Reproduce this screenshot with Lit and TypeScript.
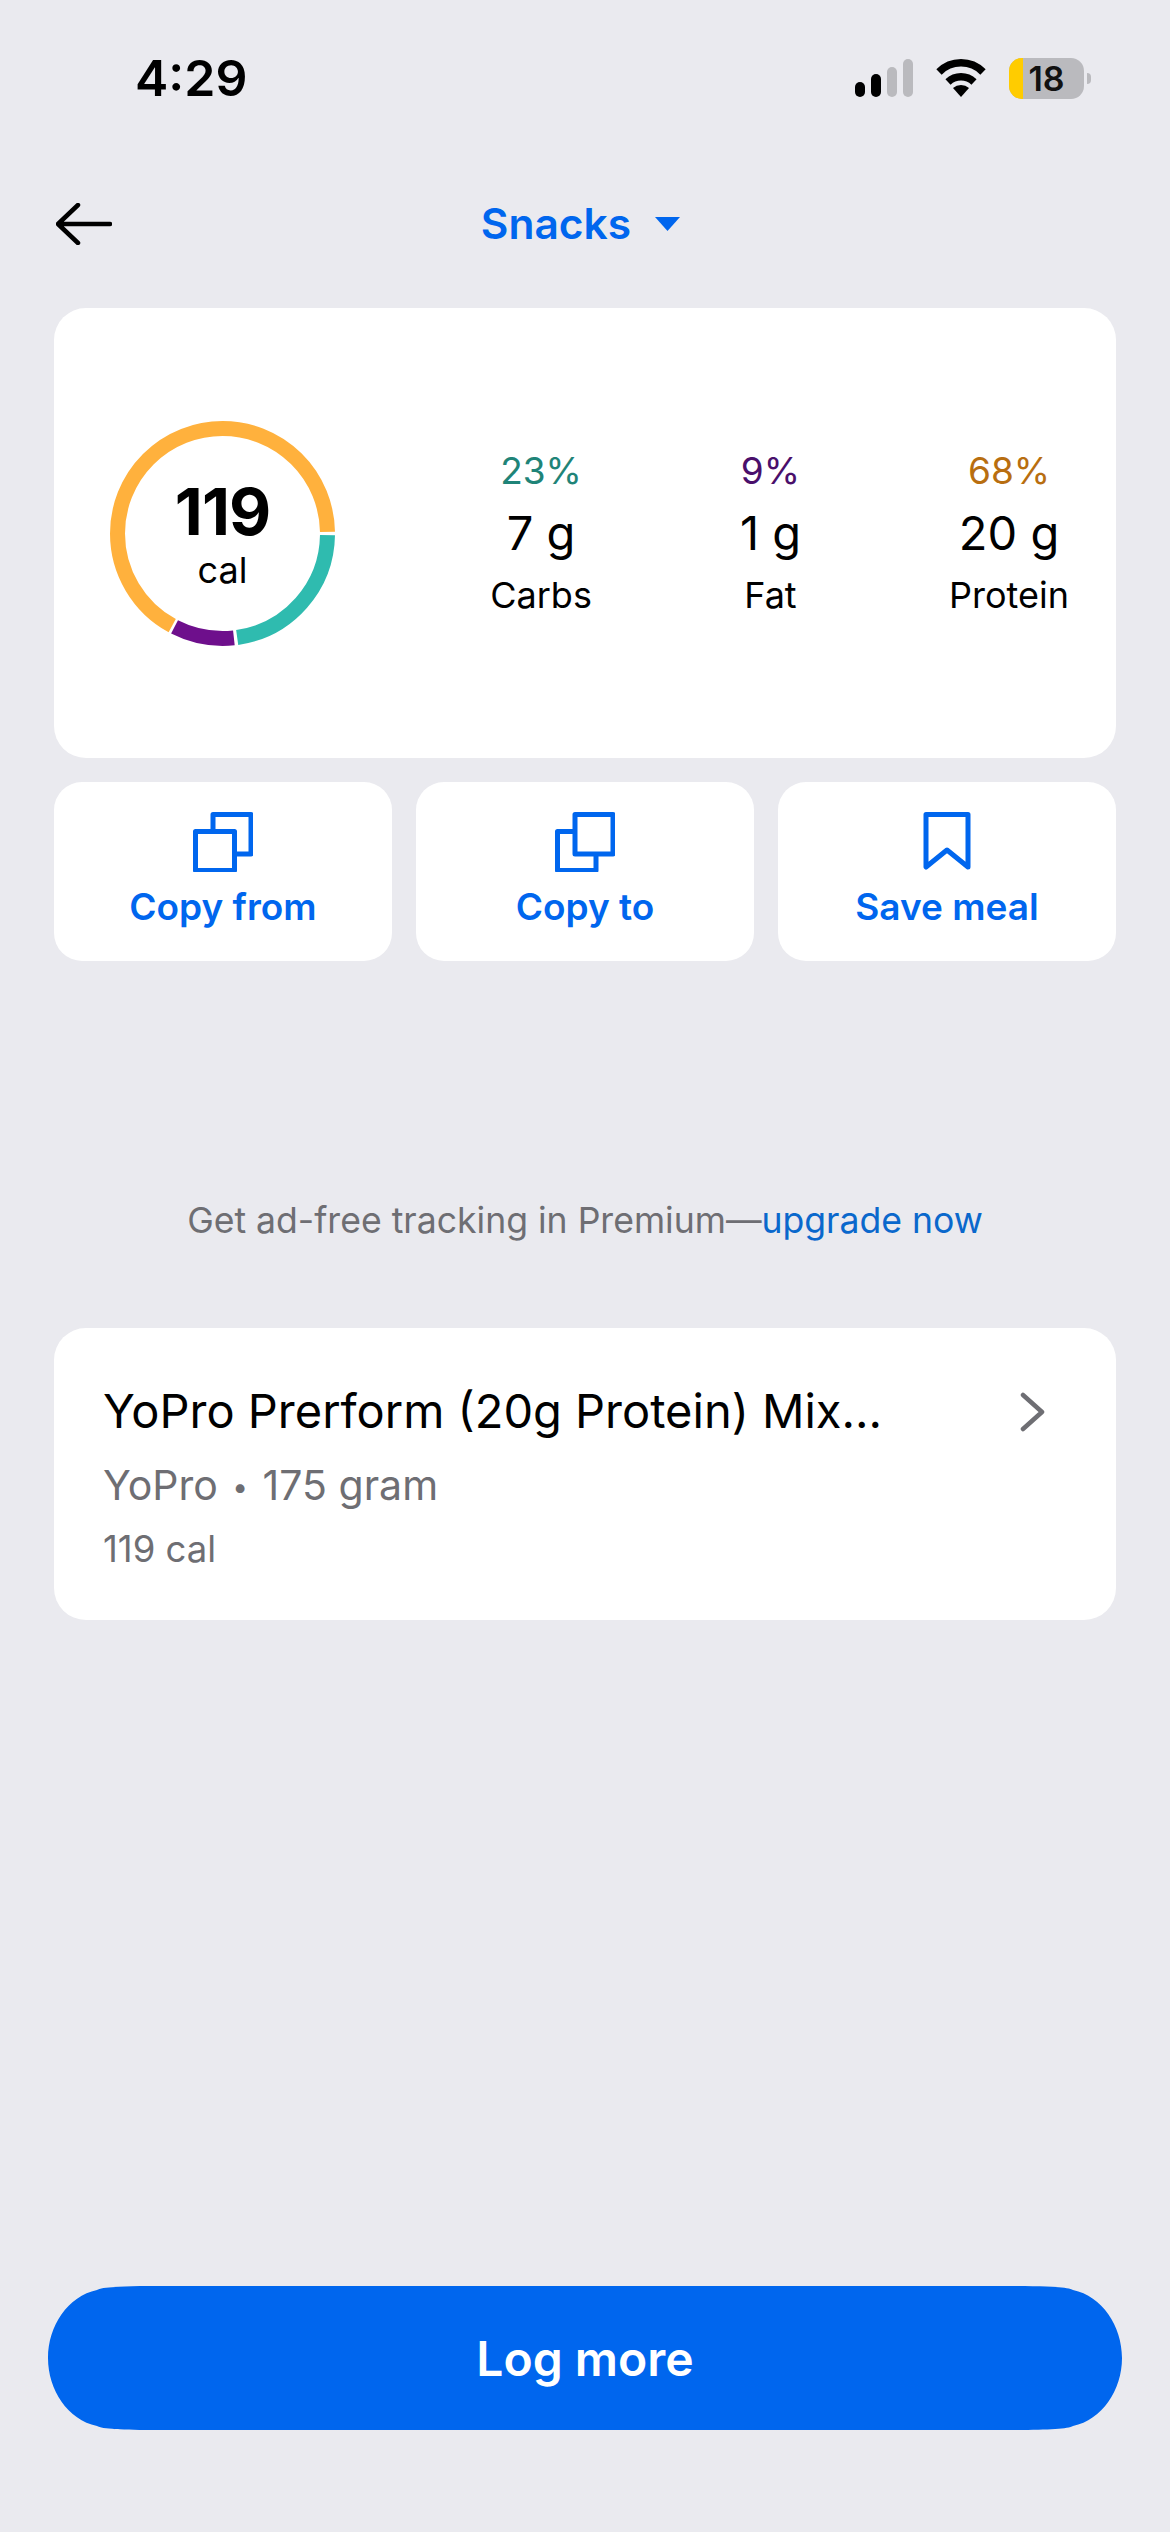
import { LitElement, html, css, svg } from "lit";
import { customElement } from "lit/decorators.js";

const RING = [
  { color: "#2FBBAF", start: 0, pct: 23 },
  { color: "#6E0F8C", start: 23, pct: 9.8 },
  { color: "#FFB13D", start: 32.7, pct: 67.3 },
];
const MACROS = [
  { pct: "23%", val: "7 g", name: "Carbs", cls: "teal" },
  { pct: "9%", val: "1 g", name: "Fat", cls: "purple" },
  { pct: "68%", val: "20 g", name: "Protein", cls: "orange" },
];

const copyFrom = html`<svg class="ico" viewBox="0 0 60 60" fill="none" stroke="#0066EE" stroke-width="5" stroke-linejoin="round">
  <path d="M20 19.5V2.5H58V42H44"/><rect x="2.5" y="19.5" width="39" height="39"/></svg>`;
const copyTo = html`<svg class="ico" viewBox="0 0 60 60" fill="none" stroke="#0066EE" stroke-width="5" stroke-linejoin="round">
  <path d="M20 19.5H2.5V58.5H41V42"/><rect x="20" y="2.5" width="38" height="39.5"/></svg>`;
const saveIcon = html`<svg class="ico" viewBox="0 0 60 60" fill="none" stroke="#0066EE" stroke-width="5" stroke-linejoin="round">
  <path d="M9 2.5H51V55L30 38L9 55Z"/></svg>`;

@customElement("app-root")
export class AppRoot extends LitElement {
  static styles = css`
    :host { display: block; }
    * { box-sizing: border-box; }
    .page {
      width: 1170px; height: 2532px; background: #EAEAEF; color: #000;
      font-family: Inter, "Liberation Sans", sans-serif;
      display: flex; flex-direction: column; align-items: center;
      padding: 57px 54px 102px;
    }
    .status { align-self: stretch; height: 42px; display: flex; align-items: center; padding-left: 81px; }
    .time { font-size: 50px; font-weight: 600; line-height: 42px; flex: 1; }
    .sicons { display: flex; align-items: center; gap: 23px; margin-right: 25px; }
    .signal { width: 58px; height: 38px; display: block; }
    .wifi { width: 50px; height: 38px; display: block; }
    .battery { display: flex; align-items: center; gap: 3px; }
    .batt {
      width: 75px; height: 41px; border-radius: 13px; background: #BABABE; overflow: hidden;
      position: relative;
    }
    .batt-fill { position: absolute; left: 0; top: 0; bottom: 0; width: 14px; background: #FFCC00; }
    .batt-num { position: relative; text-align: center; font-size: 34px; font-weight: 600; line-height: 41px; color: #111; }
    .nub { width: 4px; height: 11px; background: #BABABE; border-radius: 0 6px 6px 0; }

    .nav { align-self: stretch; margin-top: 100px; height: 50px; display: grid; grid-template-columns: 1fr auto 1fr; align-items: center; padding: 0 11px 0 2px; }
    .back { width: 56px; height: 42px; display: block; }
    .title { display: flex; align-items: center; gap: 24px; color: #0066EE; font-size: 42.5px; font-weight: 600; line-height: 50px; }
    .caret { width: 25px; height: 14px; display: block; }

    .summary {
      align-self: stretch; margin-top: 59px; height: 450px; background: #fff; border-radius: 32px;
      display: flex; align-items: center; padding: 0 47px 0 56px;
    }
    .ring { width: 225px; height: 225px; position: relative; flex: none; display: flex; flex-direction: column; align-items: center; }
    .ring svg { position: absolute; inset: 0; width: 225px; height: 225px; }
    .cal-num { margin-top: 56px; font-size: 65px; font-weight: 700; line-height: 70px; letter-spacing: -1px; }
    .cal-lab { font-size: 36px; line-height: 44px; margin-top: 1px; }
    .macros { margin-left: auto; display: flex; gap: 148px; }
    .macro { display: flex; flex-direction: column; align-items: center; }
    .pct { font-size: 37px; line-height: 44px; }
    .teal { color: #1F8478; } .purple { color: #4A0F6B; } .orange { color: #B86E10; }
    .val { font-size: 47px; line-height: 56px; margin-top: 12px; }
    .lab { font-size: 36px; line-height: 44px; margin-top: 12px; }

    .actions { align-self: stretch; margin-top: 24px; display: flex; gap: 24px; }
    .act { flex: 1; height: 179px; background: #fff; border-radius: 28px; display: flex; flex-direction: column; align-items: center; padding-top: 30px; }
    .ico { width: 60px; height: 60px; display: block; }
    .act-lab { margin-top: 13px; color: #0066EE; font-size: 37px; font-weight: 600; line-height: 44px; }

    .ad { margin-top: 238px; font-size: 35.6px; line-height: 44px; color: #6E6E73; white-space: nowrap; }
    .ad span { color: #0A68CC; }

    .food { align-self: stretch; margin-top: 85px; height: 292px; background: #fff; border-radius: 32px; display: flex; align-items: flex-start; padding: 55px 71px 0 49px; }
    .food-text { flex: 1; min-width: 0; }
    .food-title { font-size: 47px; line-height: 56px; white-space: nowrap; }
    .food-sub { margin-top: 21px; font-size: 41px; line-height: 50px; color: #6E6E73; }
    .dot { font-size: 28px; vertical-align: 3px; margin: 0 3px; }
    .food-cal { margin-top: 15px; font-size: 36.5px; line-height: 44px; color: #6E6E73; }
    .chev { width: 25px; height: 40px; margin-top: 9px; display: block; flex: none; }

    .log {
      margin-top: auto; width: 1074px; height: 144px; flex: none; background: #0066EE; color: #fff;
      display: flex; align-items: center; justify-content: center;
      font-size: 48px; font-weight: 600;
      clip-path: path("M110 0H964C1000 0 1020 1 1025 4C1054 10 1074 40 1074 72C1074 104 1054 134 1025 140C1020 143 1000 144 964 144H110C74 144 54 143 49 140C20 134 0 104 0 72C0 40 20 10 49 4C54 1 74 0 110 0Z");
    }
  `;

  render() {
    return html`<div class="page">
      <div class="status">
        <div class="time">4:29</div>
        <div class="sicons">
          <svg class="signal" viewBox="0 0 58 38">
            <rect x="0" y="23" width="10" height="15" rx="5" fill="#000"/>
            <rect x="16" y="15" width="10" height="23" rx="5" fill="#000"/>
            <rect x="32" y="8" width="10" height="30" rx="5" fill="#BABABE"/>
            <rect x="48" y="0" width="10" height="38" rx="5" fill="#BABABE"/>
          </svg>
          <svg class="wifi" viewBox="0 0 50 38">
            <path d="M3 13A31 31 0 0 1 47 13" fill="none" stroke="#000" stroke-width="7.5"/>
            <path d="M12 23A19 19 0 0 1 38 23" fill="none" stroke="#000" stroke-width="7.5"/>
            <path d="M25 38L17 29A12 12 0 0 1 33 29Z" fill="#000"/>
          </svg>
          <div class="battery">
            <div class="batt"><div class="batt-fill"></div><div class="batt-num">18</div></div>
            <div class="nub"></div>
          </div>
        </div>
      </div>

      <div class="nav">
        <svg class="back" viewBox="0 0 56 42" fill="none" stroke="#000" stroke-width="4.5" stroke-linecap="round" stroke-linejoin="round">
          <path d="M54 21H3M22 2L2 21L22 40"/>
        </svg>
        <div class="title">Snacks
          <svg class="caret" viewBox="0 0 25 14"><path d="M0 0H25L12.5 14Z" fill="#0066EE"/></svg>
        </div>
        <div></div>
      </div>

      <div class="summary">
        <div class="ring">
          <svg viewBox="0 0 225 225" fill="none">
            ${RING.map((s) => svg`<circle cx="112.5" cy="112.5" r="105" stroke=${s.color} stroke-width="15"
              pathLength="100" stroke-dasharray="${s.pct - 0.5} ${100 - s.pct + 0.5}"
              stroke-dashoffset="${-(s.start + 0.25)}"></circle>`)}
          </svg>
          <div class="cal-num">119</div>
          <div class="cal-lab">cal</div>
        </div>
        <div class="macros">
          ${MACROS.map((m) => html`<div class="macro">
            <div class="pct ${m.cls}">${m.pct}</div>
            <div class="val">${m.val}</div>
            <div class="lab">${m.name}</div>
          </div>`)}
        </div>
      </div>

      <div class="actions">
        <div class="act">${copyFrom}<div class="act-lab">Copy from</div></div>
        <div class="act">${copyTo}<div class="act-lab">Copy to</div></div>
        <div class="act">${saveIcon}<div class="act-lab">Save meal</div></div>
      </div>

      <div class="ad">Get ad-free tracking in Premium—<span>upgrade now</span></div>

      <div class="food">
        <div class="food-text">
          <div class="food-title">YoPro Prerform (20g Protein) Mix...</div>
          <div class="food-sub">YoPro <span class="dot">•</span> 175 gram</div>
          <div class="food-cal">119 cal</div>
        </div>
        <svg class="chev" viewBox="0 0 25 40" fill="none" stroke="#6E6E73" stroke-width="4.5" stroke-linecap="round" stroke-linejoin="round">
          <path d="M3 3L22 20L3 37"/>
        </svg>
      </div>

      <div class="log">Log more</div>
    </div>`;
  }
}
